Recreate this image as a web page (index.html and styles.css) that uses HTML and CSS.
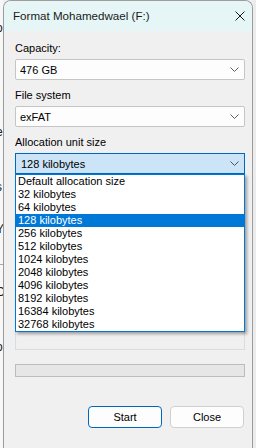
FILE: index.html
```html
<!DOCTYPE html>
<html lang="en">
<head>
    <meta charset="UTF-8">
    <meta name="viewport" content="width=device-width, initial-scale=1.0">
    <title>Format Mohamedwael (F:)</title>
    <link rel="stylesheet" href="styles.css">
</head>
<body>
    <div class="desktop">
        <!-- window behind the dialog, only its right edge shows -->
        <div class="behind">
            <div class="frag">o</div>
            <div class="frag">l</div>
            <div class="frag">r</div>
            <div class="frag">e</div>
            <div class="frag">s</div>
            <div class="frag">Y</div>
            <div class="frag sep">C</div>
            <div class="frag">r</div>
            <div class="frag">o</div>
        </div>

        <div class="dialog">
            <div class="titlebar">
                <span class="title">Format Mohamedwael (F:)</span>
                <svg class="close" width="10" height="10" viewBox="0 0 10 10">
                    <path d="M0.5 0.5 L9.5 9.5 M9.5 0.5 L0.5 9.5" stroke="#1a1a1a" stroke-width="1" fill="none"/>
                </svg>
            </div>

            <div class="content">
                <div class="label">Capacity:</div>
                <div class="combo">
                    <span>476 GB</span>
                    <svg class="chev" width="9" height="5" viewBox="0 0 9 5"><path d="M0.5 0.5 L4.5 4.5 L8.5 0.5" stroke="#606060" fill="none"/></svg>
                </div>

                <div class="label">File system</div>
                <div class="combo">
                    <span>exFAT</span>
                    <svg class="chev" width="9" height="5" viewBox="0 0 9 5"><path d="M0.5 0.5 L4.5 4.5 L8.5 0.5" stroke="#606060" fill="none"/></svg>
                </div>

                <div class="label">Allocation unit size</div>
                <div class="field">
                    <div class="combo focused">
                        <span>128 kilobytes</span>
                        <svg class="chev" width="9" height="5" viewBox="0 0 9 5"><path d="M0.5 0.5 L4.5 4.5 L8.5 0.5" stroke="#505050" fill="none"/></svg>
                    </div>
                    <ul class="dropdown">
                        <li>Default allocation size</li>
                        <li>32 kilobytes</li>
                        <li>64 kilobytes</li>
                        <li class="selected">128 kilobytes</li>
                        <li>256 kilobytes</li>
                        <li>512 kilobytes</li>
                        <li>1024 kilobytes</li>
                        <li>2048 kilobytes</li>
                        <li>4096 kilobytes</li>
                        <li>8192 kilobytes</li>
                        <li>16384 kilobytes</li>
                        <li>32768 kilobytes</li>
                    </ul>
                </div>

                <!-- options group, mostly covered by the open list -->
                <div class="group"></div>

                <div class="progress"></div>

                <div class="buttons">
                    <button class="btn default">Start</button>
                    <button class="btn">Close</button>
                </div>
            </div>
        </div>
        <div class="outside"></div>
    </div>
</body>
</html>
```

FILE: styles.css
```css
body {
    margin: 0;
    font-family: "Liberation Sans", Arial, sans-serif;
    font-size: 11px;
    color: #000;
    background-color: #f0f0f0;
    overflow: hidden;
}

.desktop {
    display: flex;
    width: 256px;
    height: 448px;
    overflow: hidden;
}

.behind {
    width: 3px;
    flex: none;
    overflow: hidden;
    background-color: #f7f7f7;
    padding-top: 21px;
    font-size: 12px;
    line-height: 14px;
}

.frag {
    margin-left: -4px;
    color: #202020;
}

.frag:nth-child(2) { margin-top: 27px; }
.frag:nth-child(3) { margin-top: 18px; }
.frag:nth-child(4) { margin-top: 17px; }
.frag:nth-child(5) { margin-top: 41px; }
.frag:nth-child(6) { margin-top: 28px; }
.frag:nth-child(7) { margin-top: 49px; }
.frag:nth-child(8) { margin-top: 20px; }
.frag:nth-child(9) { margin-top: 7px; }

.frag.sep {
    border-top: 1px solid #a8a8a8;
    padding-top: 20px;
    margin-top: 28px;
}

.dialog {
    width: 248px;
    flex: none;
    border: 1px solid #9c9c9c;
    border-bottom: none;
    border-radius: 8px 8px 0 0;
    background-color: #f0f0f0;
    overflow: hidden;
}

.outside {
    flex: 1;
    background-color: #ececec;
}

.titlebar {
    height: 30px;
    display: flex;
    align-items: center;
    justify-content: space-between;
    padding: 0 6px 0 9px;
    background-color: #e6f6f6;
}

.title {
    font-size: 11.6px;
    color: #1a1a1a;
    margin-top: -1px;
}

.close {
    margin-right: 1px;
    margin-top: -1px;
}

.content {
    padding: 9px 7px 0 11px;
}

.label {
    line-height: 16px;
    margin-bottom: 3px;
}

.combo {
    height: 19px;
    display: flex;
    align-items: center;
    justify-content: space-between;
    padding: 0 5px 0 4px;
    border: 1px solid #c5c5c5;
    border-radius: 2px;
    background-color: #fdfdfd;
    margin-bottom: 7px;
}

.combo.focused {
    border-color: #0067c0;
    background-color: #cce4f7;
    border-radius: 0;
    padding-left: 5px;
    margin-bottom: 0;
}

.field {
    position: relative;
}

.dropdown {
    position: absolute;
    top: 100%;
    left: 0;
    right: 0;
    z-index: 2;
    margin: 0;
    padding: 0;
    list-style: none;
    border: 1px solid #0078d7;
    background-color: #fff;
    box-shadow: 2px 2px 3px rgba(0, 0, 0, 0.35);
}

.dropdown li {
    height: 13px;
    line-height: 13px;
    padding-left: 2px;
    white-space: nowrap;
}

.dropdown li.selected {
    background-color: #0078d7;
    color: #fff;
}

.group {
    margin-top: 8px;
    height: 166px;
    border: 1px solid #dcdcdc;
}

.progress {
    margin-top: 14px;
    height: 11px;
    border: 1px solid #bcbcbc;
    background-color: #e6e6e6;
}

.buttons {
    display: flex;
    justify-content: flex-end;
    gap: 8px;
    margin-top: 29px;
    padding-right: 1px;
}

.btn {
    width: 74px;
    height: 22px;
    font: inherit;
    color: #000;
    border: 1px solid #d0d0d0;
    border-radius: 4px;
    background-color: #fdfdfd;
    padding: 0;
}

.btn.default {
    border-color: #0067c0;
}
```
